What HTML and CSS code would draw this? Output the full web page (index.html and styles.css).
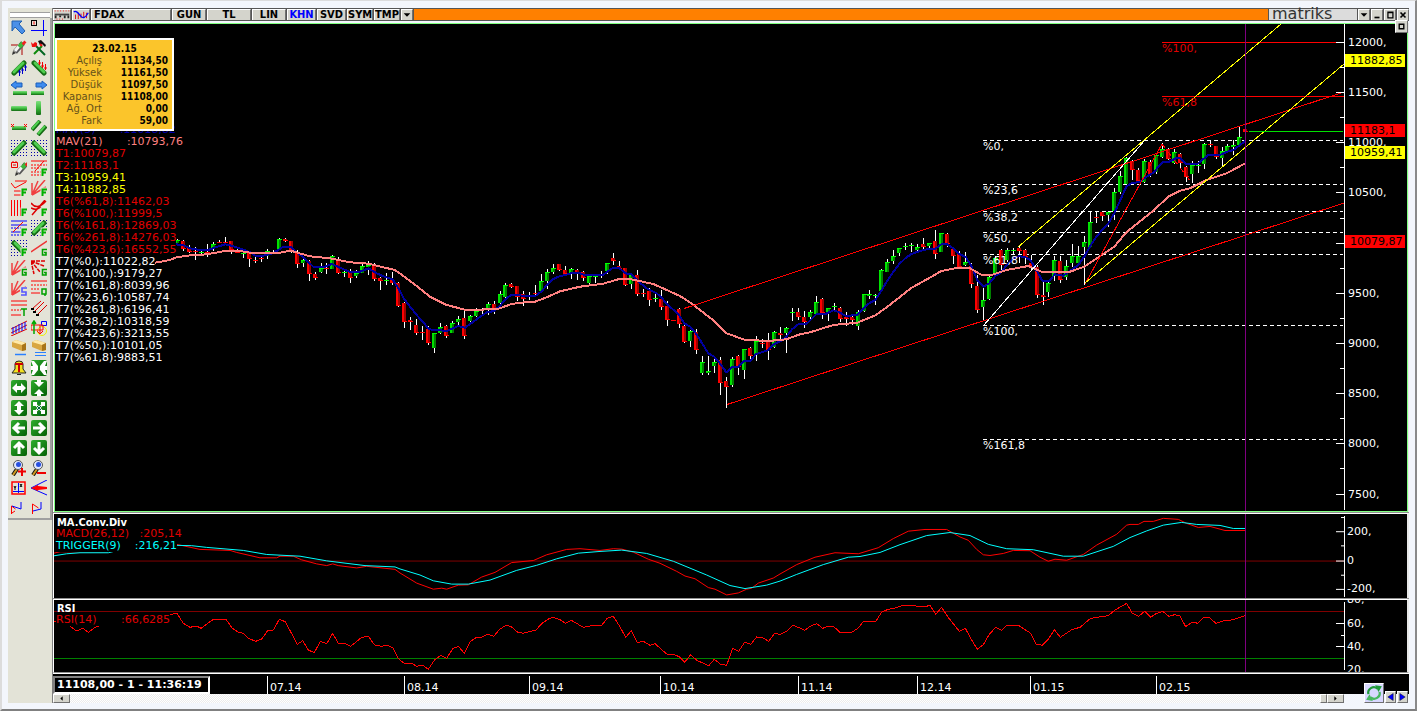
FILE: index.html
```
<!DOCTYPE html>
<html lang="tr">
<head>
<meta charset="utf-8">
<title>FDAX - matriks</title>
<link rel="stylesheet" href="styles.css">
</head>
<body>
<svg class="defs" aria-hidden="true">
  <defs>
    <linearGradient id="gbar" x1="0" y1="0" x2="0" y2="1"><stop offset="0" stop-color="#7fe07f"/><stop offset=".5" stop-color="#3cba3c"/><stop offset="1" stop-color="#146b14"/></linearGradient>
    <linearGradient id="gtile" x1="0" y1="0" x2="1" y2="1"><stop offset="0" stop-color="#2fae2f"/><stop offset="1" stop-color="#046004"/></linearGradient>
    <pattern id="dots" width="3" height="3" patternUnits="userSpaceOnUse"><rect width="1" height="1" fill="#0000a8"/></pattern>
    <g id="up45"><path d="M3 13L13 3" stroke="#146b14" stroke-width="5" stroke-linecap="round"/><path d="M3 12L12 3" stroke="#4fcf4f" stroke-width="3" stroke-linecap="round"/></g>
    <g id="dn45"><path d="M3 3L13 13" stroke="#146b14" stroke-width="5" stroke-linecap="round"/><path d="M4 3L13 12" stroke="#4fcf4f" stroke-width="3" stroke-linecap="round"/></g>
    <g id="tile"><rect width="16" height="16" rx="2" fill="url(#gtile)"/></g>
    <g id="pen"><path d="M4 12L12 3" stroke="#555" stroke-width="5"/><path d="M4 11L9 5" stroke="#f4f4f4" stroke-width="3"/><path d="M8 7L12 3" stroke="#3cba3c" stroke-width="4"/><path d="M12 2l2 2" stroke="#e22" stroke-width="4"/><path d="M1 15l1-4 3 2z" fill="#333"/></g>
    <g id="F"><path d="M9.500 7.500h7v9h-7z" fill="#e3e3d7"/><path d="M11.500 16V9.500H16M11 12.500h4" stroke="#00b000" stroke-width="2" fill="none"/></g>
    <g id="G"><path d="M9.500 7.500h7v9h-7z" fill="#e3e3d7"/><path d="M16 9.500h-4.500v5.500h3.500v-2.500h-2" stroke="#00a000" stroke-width="1.600" fill="none"/></g>
    <g id="fan"><path d="M1 15L1 3M1 15L7 1M1 15L14 0M1 15L15 7" stroke="#f04040" stroke-width="1.500" fill="none"/></g>
    <g id="loupe"><path d="M2 15L6 9" stroke="#111" stroke-width="4"/><path d="M2 15L6 9" stroke="#d09a20" stroke-width="2"/><circle cx="7" cy="5" r="4.500" fill="#dfe8ff" stroke="#555"/><circle cx="7.500" cy="4.500" r="2.500" fill="#2850e0"/></g>
    <g id="eraser"><path d="M1 2l4-2 10 3v7l-4 1-10-4z" fill="#d9a640"/><path d="M1 2l4-2 10 3-4 2z" fill="#ffe9a8"/><path d="M11 5l4-2v7l-4 1z" fill="#a87418"/></g>
  </defs>
</svg>
<div class="window">
  <nav class="tools" aria-label="Çizim araçları">
    <div class="grip"></div>
    <div class="palette">
      <button aria-label="Seç"><svg viewBox="0 0 16 16"><path d="M1 1h10L8 4l6 7-3 3-7-7-3 4z" fill="#4a90e8" stroke="#2060b0"/></svg></button>
      <button aria-label="İmleç"><svg viewBox="0 0 16 16"><path d="M12.500 0v16M0 10.500h16" stroke="#00f"/><rect x=".5" y=".5" width="5" height="5" fill="none" stroke="#000"/><path d="M3 1.500v3" stroke="red"/></svg></button>
      <button aria-label="Kalem"><svg viewBox="0 0 16 16"><path d="M0 5h11v10" fill="none" stroke="#a00"/><use href="#pen"/></svg></button>
      <button aria-label="Araçlar"><svg viewBox="0 0 16 16"><path d="M3 14L11 6" stroke="#0a8a0a" stroke-width="2"/><path d="M5 6l9 9" stroke="#062" stroke-width="2"/><path d="M0 2l2 2 2-2 2 1v3L4 7H1z" fill="#e11"/><path d="M7 1l3-1 5 5-1 2-3-3-2 1z" fill="#111"/><path d="M9 4l2 2" stroke="#e11" stroke-width="2"/></svg></button>
      <button aria-label="Yükselen"><svg viewBox="0 0 16 16"><use href="#up45"/><path d="M8.500 10v6M11.500 8v6M14.500 5v6M7 12h3M10 10h3M13 7h3" stroke="#00c"/></svg></button>
      <button aria-label="Düşen"><svg viewBox="0 0 16 16"><use href="#dn45"/><path d="M8.500 0v5M11.500 2v6M14.500 4v6M7 3h3M10 6h3M13 8h3" stroke="#e00"/></svg></button>
      <button aria-label="Sola"><svg viewBox="0 0 16 16"><path d="M0 5l5-4v2h6v4H5v2z" fill="#3d8cf0" stroke="#1c5fb8"/><rect x="2" y="11" width="14" height="4" fill="url(#gbar)"/></svg></button>
      <button aria-label="Sağa"><svg viewBox="0 0 16 16"><path d="M16 5l-5-4v2H5v4h6v2z" fill="#3d8cf0" stroke="#1c5fb8"/><rect y="11" width="13" height="4" fill="url(#gbar)"/></svg></button>
      <button aria-label="Yatay"><svg viewBox="0 0 16 16"><rect y="6" width="16" height="5" rx="1" fill="url(#gbar)"/></svg></button>
      <button aria-label="Dikey"><svg viewBox="0 0 16 16"><rect x="5" y="1" width="5" height="14" rx="1" fill="url(#gbar)"/></svg></button>
      <button aria-label="Parça"><svg viewBox="0 0 16 16"><rect x="1" y="6" width="14" height="4" fill="url(#gbar)"/><path d="M0 4l3 3m0-3l-3 3M13 4l3 3m0-3l-3 3" stroke="red"/></svg></button>
      <button aria-label="Paralel"><svg viewBox="0 0 16 16"><path d="M1 10L9 1M7 15l8-9" stroke="#146b14" stroke-width="4"/><path d="M1 9L8 1M7 14l7-8" stroke="#4fcf4f" stroke-width="2"/></svg></button>
      <button aria-label="Bölge yukarı"><svg viewBox="0 0 16 16"><rect width="16" height="16" fill="url(#dots)"/><use href="#up45"/></svg></button>
      <button aria-label="Bölge aşağı"><svg viewBox="0 0 16 16"><rect width="16" height="16" fill="url(#dots)"/><use href="#dn45"/></svg></button>
      <button aria-label="Not"><svg viewBox="0 0 16 16"><path d="M.5 2.500h6v5h-6zM2 1v2M5 1v2M2 5h3" fill="none" stroke="#e00"/><g transform="translate(3 1)"><use href="#pen"/></g></svg></button>
      <button aria-label="Fibonacci"><svg viewBox="0 0 16 16"><path d="M0 1h16M4 11L13 1" stroke="red" fill="none"/><path d="M0 5h16M0 8h10M0 12h10M0 15h10" stroke="red" stroke-dasharray="2 1"/><use href="#F"/></svg></button>
      <button aria-label="Fibonacci uzatma"><svg viewBox="0 0 16 16"><path d="M0 3l4 5L15 2M4 1h12M3 11h7M3 15h7" stroke="red" fill="none"/><use href="#F"/></svg></button>
      <button aria-label="Fibonacci yelpaze"><svg viewBox="0 0 16 16"><use href="#fan"/><use href="#F"/></svg></button>
      <button aria-label="Fibonacci zaman"><svg viewBox="0 0 16 16"><path d="M.5 0v16M3.500 0v16M6.500 0v16M9.500 0v16" stroke="red"/><use href="#F"/></svg></button>
      <button aria-label="Fibonacci yay"><svg viewBox="0 0 16 16"><path d="M0 3q6 8 15-2M0 8q5 3 10-1M1 15L14 0" stroke="#d00" stroke-width="1.500" fill="none"/><use href="#F"/></svg></button>
      <button aria-label="Fibonacci düzey"><svg viewBox="0 0 16 16"><path d="M0 1h16M0 5h16M0 12h10" stroke="#00f"/><path d="M2 12L12 2" stroke="red"/><path d="M0 8h10M0 15h10" stroke="#00f" stroke-dasharray="2 1"/><use href="#F"/></svg></button>
      <button aria-label="Fibonacci kanal"><svg viewBox="0 0 16 16"><rect width="16" height="16" fill="url(#dots)"/><use href="#up45"/><use href="#F"/></svg></button>
      <button aria-label="Fibonacci kanal aşağı"><svg viewBox="0 0 16 16"><rect width="16" height="16" fill="url(#dots)"/><use href="#dn45"/><use href="#F"/></svg></button>
      <button aria-label="Gann çizgi"><svg viewBox="0 0 16 16"><path d="M0 12L16 1" stroke="#e33" stroke-width="1.500"/><use href="#G"/></svg></button>
      <button aria-label="Gann yelpaze"><svg viewBox="0 0 16 16"><use href="#fan"/><use href="#G"/></svg></button>
      <button aria-label="Gann yelpaze ters"><svg viewBox="0 0 16 16"><path d="M0 1L15 1M0 1L13 6M0 1L9 12M0 1L3 14" stroke="#d00" stroke-width="1.500" stroke-dasharray="4 1"/><use href="#G"/></svg></button>
      <button aria-label="Hız çizgileri"><svg viewBox="0 0 16 16"><use href="#fan"/><path d="M9 7h7v9H9z" fill="#e3e3d7"/><path d="M16 8h-5v4h4v3h-5" stroke="#55f" stroke-width="1.600" fill="none"/></svg></button>
      <button aria-label="Çeyrek"><svg viewBox="0 0 16 16"><path d="M0 1h16M0 13h9" stroke="red"/><path d="M0 5h16M0 9h9" stroke="red" stroke-dasharray="2 1"/><path d="M11 9h4v5h-4zM14 14v2" stroke="#00a000" stroke-width="1.500" fill="none"/></svg></button>
      <button aria-label="Üçte bir"><svg viewBox="0 0 16 16"><path d="M0 1h16M0 5h16M0 15h10" stroke="red"/><path d="M0 10h10" stroke="red" stroke-dasharray="2 1"/><path d="M10 9h6M13 9v7" stroke="#00a000" stroke-width="1.500"/></svg></button>
      <button aria-label="Andrews"><svg viewBox="0 0 16 16"><path d="M1 9L10 1M3 12L13 2M6 15L16 5" stroke="#d00"/><path d="M0 9h3M2 12h3M5 15h3" stroke="#000" stroke-width="2"/></svg></button>
      <button aria-label="Regresyon"><svg viewBox="0 0 16 16"><path d="M0 9L16 1M0 13L16 5M0 16L16 9" stroke="#d00"/><path d="M2 7v7M5 6v7M8 4v8M11 3v8M14 2v7" stroke="#00f"/></svg></button>
      <button aria-label="Şekiller"><svg viewBox="0 0 16 16"><path d="M10.500 1.500h5v4h-5z" stroke="#00f" fill="none"/><circle cx="11" cy="11" r="4.500" stroke="#ee0" fill="none"/><path d="M0 5h12v5H0zM9 5v8M6 11l3 3 3-3" stroke="red" fill="none"/><path d="M3 14V2M1 4l2-3 2 3" stroke="#0a0" stroke-width="1.500" fill="none"/></svg></button>
      <button aria-label="Sil"><svg viewBox="0 0 16 16"><use href="#eraser"/><path d="M4 14.500h11" stroke="#2a80ff" stroke-width="1.500"/></svg></button>
      <button aria-label="Hepsini sil"><svg viewBox="0 0 16 16"><use href="#eraser"/><path d="M4 12.500h11M4 15.500h11" stroke="#2a80ff"/></svg></button>
      <button aria-label="Alarm"><svg viewBox="0 0 16 16"><path d="M1 13L4 9V4q0-3 4-3t4 3v5l3 4z" fill="#f2e020" stroke="#222"/><path d="M4 4h8M8 4v8" stroke="#c00" stroke-width="2"/><path d="M6 14h4v1H6z" fill="#222"/></svg></button>
      <button aria-label="Daralt"><svg viewBox="0 0 16 16"><use href="#tile"/><path d="M0 1h3l4 5 0 4-4 5H0l2-5H0V6h2zM16 1h-3L9 6v4l4 5h3l-2-5h2V6h-2z" fill="#fff"/></svg></button>
      <button aria-label="Yatay genişlet"><svg viewBox="0 0 16 16"><use href="#tile"/><path d="M1 8l5-5v3h4V3l5 5-5 5v-3H6v3z" fill="#fff"/></svg></button>
      <button aria-label="Dikey daralt"><svg viewBox="0 0 16 16"><use href="#tile"/><path d="M8 7L3 2h3V0h4v2h3zM8 9l-5 5h3v2h4v-2h3z" fill="#fff"/></svg></button>
      <button aria-label="Dikey genişlet"><svg viewBox="0 0 16 16"><use href="#tile"/><path d="M8 1l5 5h-3v4h3l-5 5-5-5h3V6H3z" fill="#fff"/></svg></button>
      <button aria-label="Sığdır"><svg viewBox="0 0 16 16"><use href="#tile"/><path d="M2 2h4v4H2zM10 2h4v4h-4zM2 10h4v4H2zM10 10h4v4h-4z" fill="#fff"/><path d="M3 3l10 10M13 3L3 13" stroke="#fff" stroke-width="2"/><path d="M6 6l4 4M10 6l-4 4M8 1v3M8 12v3" stroke="#064"/></svg></button>
      <button aria-label="Sol"><svg viewBox="0 0 16 16"><use href="#tile"/><path d="M14 8H4M8 3L3 8l5 5" stroke="#fff" stroke-width="3" fill="none"/></svg></button>
      <button aria-label="Sağ"><svg viewBox="0 0 16 16"><use href="#tile"/><path d="M2 8h10M8 3l5 5-5 5" stroke="#fff" stroke-width="3" fill="none"/></svg></button>
      <button aria-label="Yukarı"><svg viewBox="0 0 16 16"><use href="#tile"/><path d="M8 14V4M3 8l5-5 5 5" stroke="#fff" stroke-width="3" fill="none"/></svg></button>
      <button aria-label="Aşağı"><svg viewBox="0 0 16 16"><use href="#tile"/><path d="M8 2v10M3 8l5 5 5-5" stroke="#fff" stroke-width="3" fill="none"/></svg></button>
      <button aria-label="Yakınlaştır"><svg viewBox="0 0 16 16"><use href="#loupe"/><path d="M7 11.500h8M11 8v8" stroke="#e00" stroke-width="2"/></svg></button>
      <button aria-label="Uzaklaştır"><svg viewBox="0 0 16 16"><use href="#loupe"/><path d="M6 13h9" stroke="#e00" stroke-width="2"/></svg></button>
      <button aria-label="Eksenler"><svg viewBox="0 0 16 16"><rect x="1" y="2" width="13" height="12" fill="none" stroke="red" stroke-width="1.500"/><path d="M7.500 3v10M2 11.500h11" stroke="#00f"/><path d="M3 6l1 2 1-2M4 8v2M9 4l2 3M11 4l-2 3" stroke="#000" fill="none"/></svg></button>
      <button aria-label="Projeksiyon"><svg viewBox="0 0 16 16"><path d="M0 8L16 0M0 8l16 7" stroke="#00f"/><path d="M0 8l7-3v1l9 1v2l-9 1v1z" fill="red"/></svg></button>
      <button aria-label="Zikzak"><svg viewBox="0 0 16 16"><path d="M.5 14V6l4 3" fill="none" stroke="red"/><path d="M1 6l9 3V2" fill="none" stroke="#00f"/><path d="M1 13l3-2" stroke="red"/></svg></button>
      <button aria-label="Flama"><svg viewBox="0 0 16 16"><path d="M1.500 14V4l6 4" fill="none" stroke="red"/><path d="M2 11l8-2V2" fill="none" stroke="#00f"/></svg></button>
    </div>
  </nav>

  <main class="work">
    <header class="bar">
      <button class="cell ico" aria-label="Grafik tipi"><svg viewBox="0 0 16 11"><path d="M0 4h16v2H0z" fill="#444"/><path d="M1 6v3M6 6v2M11 6v3M15 6v3" stroke="#222" stroke-width="2"/><path d="M0 1h16M2 10h8" stroke="red" stroke-dasharray="1 2"/></svg></button>
      <button class="cell ico" aria-label="İndikatör"><svg viewBox="0 0 16 11"><path d="M2 5v5M5 3v7M8 4v5M11 2v6M14 3v6" stroke="#d00"/><path d="M0 2q3-2 7 4t9-3" fill="none" stroke="#00f" stroke-width="1.500"/></svg></button>
      <button class="cell symbol">FDAX</button>
      <button class="cell day">GUN</button>
      <button class="cell cur">TL</button>
      <button class="cell day">LIN</button>
      <button class="cell mid active">KHN</button>
      <button class="cell mid">SVD</button>
      <button class="cell sml">SYM</button>
      <button class="cell sml">TMP</button>
      <button class="cell box" aria-label="Liste"><svg viewBox="0 0 12 10"><path d="M2 3h8L6 7z"/></svg></button>
      <span class="fill"></span>
      <span class="brand">matriks</span>
      <button class="cell box" aria-label="Menü"><svg viewBox="0 0 12 10"><path d="M2 3h8L6 7z"/></svg></button>
      <button class="cell box" aria-label="Küçült"><svg viewBox="0 0 12 10"><path d="M3 7h6v2H3z"/></svg></button>
      <button class="cell box" aria-label="Büyüt"><svg viewBox="0 0 12 10"><path d="M3.500 1.500h6v7h-6zM3 2h7" fill="none" stroke="#000" stroke-width="1.500"/></svg></button>
      <button class="cell box" aria-label="Kapat"><svg viewBox="0 0 12 10"><path d="M3 2l6 6M9 2L3 8" stroke="#000" stroke-width="2"/></svg></button>
    </header>

    <section class="pane price" id="price">
      <svg class="plot" viewBox="55 24 1352 487" preserveAspectRatio="none" id="priceSvg"></svg>
      <ul class="values">
        <li class="navy">MAV(5)       :11018,82</li>
        <li class="pink">MAV(21)       :10793,76</li>
        <li class="red">T1:10079,87</li>
        <li class="red">T2:11183,1</li>
        <li class="yellow">T3:10959,41</li>
        <li class="yellow">T4:11882,85</li>
        <li class="red">T6(%61,8):11462,03</li>
        <li class="red">T6(%100,):11999,5</li>
        <li class="red">T6(%161,8):12869,03</li>
        <li class="red">T6(%261,8):14276,03</li>
        <li class="red">T6(%423,6):16552,55</li>
        <li>T7(%0,):11022,82</li>
        <li>T7(%100,):9179,27</li>
        <li>T7(%161,8):8039,96</li>
        <li>T7(%23,6):10587,74</li>
        <li>T7(%261,8):6196,41</li>
        <li>T7(%38,2):10318,59</li>
        <li>T7(%423,6):3213,55</li>
        <li>T7(%50,):10101,05</li>
        <li>T7(%61,8):9883,51</li>
      </ul>
      <table class="tip">
        <caption>23.02.15</caption>
        <tr><th>Açılış</th><td>11134,50</td></tr>
        <tr><th>Yüksek</th><td>11161,50</td></tr>
        <tr><th>Düşük</th><td>11097,50</td></tr>
        <tr><th>Kapanış</th><td>11108,00</td></tr>
        <tr><th>Ağ. Ort</th><td>0,00</td></tr>
        <tr><th>Fark</th><td>59,00</td></tr>
      </table>
      <button class="cell restore" aria-label="Paneli büyüt"><svg viewBox="0 0 12 10"><path d="M3.500 2.500h5v5h-5z" fill="none" stroke="#000" stroke-width="1.500"/></svg></button>
    </section>

    <section class="pane macd" id="macd">
      <svg class="plot" viewBox="54 514 1353 84" preserveAspectRatio="none" id="macdSvg"></svg>
      <h2>MA.Conv.Div</h2>
      <ul class="values">
        <li class="red">MACD(26,12)   :205,14</li>
        <li class="cyan">TRIGGER(9)    :216,21</li>
      </ul>
    </section>

    <section class="pane rsi" id="rsi">
      <svg class="plot" viewBox="54 600 1353 72" preserveAspectRatio="none" id="rsiSvg"></svg>
      <h2>RSI</h2>
      <ul class="values"><li class="red">RSI(14)       :66,6285</li></ul>
    </section>

    <footer class="time" id="time">
      <output class="quote">11108,00 - 1 - 11:36:19</output>
    </footer>
    <div class="scroll">
      <div class="track">
        <button class="cell step" aria-label="Geri"><svg viewBox="0 0 8 6"><path d="M5 1v4L3 3z"/></svg></button>
        <span class="fillgap"></span>
        <span class="cell thumb"></span>
        <button class="cell step" aria-label="İleri"><svg viewBox="0 0 8 6"><path d="M3 1v4l2-2z"/></svg></button>
      </div>
    </div>
    <div class="corner">
      <button class="cell refresh" aria-label="Yenile"><svg viewBox="0 0 16 16"><path d="M3 9a5 5 0 0 1 8-5" fill="none" stroke="#1f9a3a" stroke-width="2"/><path d="M9 1l6 1-3 5z" fill="#1f9a3a"/><path d="M13 7a5 5 0 0 1-8 5" fill="none" stroke="#48b860" stroke-width="2"/><path d="M7 15l-6-1 3-5z" fill="#48b860"/></svg></button>
      <button class="cell nav" aria-label="Önceki"><svg viewBox="0 0 10 10"><path d="M8 1v8L2 5z" fill="#00f" stroke="#000" stroke-width=".5"/></svg></button>
      <button class="cell nav" aria-label="Sonraki"><svg viewBox="0 0 10 10"><path d="M2 1v8l6-4z" fill="#00f" stroke="#000" stroke-width=".5"/></svg></button>
    </div>
  </main>
</div>
<script src="chart.js"></script>
</body>
</html>
```
FILE: styles.css
```
* { box-sizing: border-box; }
body {
  margin: 0;
  background: #f3f6fc;
  font: 11px/12px "DejaVu Sans", Verdana, sans-serif;
  color: #fff;
}
button { margin: 0; padding: 0; border: 0; background: none; font: inherit; color: #000; }
ul { list-style: none; margin: 0; padding: 0; }
.defs { position: absolute; width: 0; height: 0; }

.window {
  display: flex;
  height: 100vh;
  min-height: 600px;
  padding: 7px 6px 6px;
  border: solid #dcdcdc;
  border-width: 1px 2px 2px;
  border-right-color: #8a8a8a;
  border-bottom-color: #808080;
}

/* tool palette */
.tools { flex: none; width: 44px; background: #e3e3d7; }
.grip { height: 6px; margin: 4px 2px 0; border: solid #a0a0a0; border-width: 1px 0; background: #fff; }
.palette {
  display: grid;
  grid-template-columns: 16px 16px;
  grid-auto-rows: 16px;
  gap: 4px;
  padding: 2px 3px 2px;
  border: solid #a0a0a0;
  border-width: 0 2px 2px 0;
}
.palette button { width: 16px; height: 16px; }
.palette svg { display: block; width: 16px; height: 16px; overflow: hidden; fill: none; }

/* work area */
.work {
  position: relative;
  flex: 1;
  min-width: 0;
  display: flex;
  flex-direction: column;
  border-left: 1px solid #808080;
}
.bar {
  flex: none;
  display: flex;
  height: 13px;
  background: #555;
  gap: 1px;
  padding: 1px 0;
  font: bold 11px/11px "DejaVu Sans Condensed", "DejaVu Sans", sans-serif;
}
.cell {
  flex: none;
  background: #d4d4cc;
  border: 1px solid;
  border-color: #fff #707070 #707070 #fff;
}
.bar .cell { line-height: 10px; border-width: 1px 1px 0; }
.cell svg { display: block; width: 100%; height: 100%; }
.ico { width: 18px; }
.symbol { width: 80px; padding-left: 2px; text-align: left; }
.day { width: 34px; }
.cur { width: 44px; }
.mid { width: 29px; }
.sml { width: 26px; }
.bar .active { color: #0000ff; }
.box { width: 12px; }
.fill { flex: 1; background: #ff8000; }
.brand {
  flex: none;
  width: 88px;
  padding-left: 3px;
  background: #dcdcdc;
  color: #333;
  font: 16px/10px "DejaVu Sans", sans-serif;
}

.pane {
  position: relative;
  background: #000;
  border-left: 1px solid #fff;
  border-right: 2px solid #e8e8e8;
  overflow: hidden;
}
.price {
  flex: 1;
  min-height: 0;
  margin-top: 2px;
  border-left: 0;
  box-shadow: inset 1px 0 #fff;
  overflow: visible;
}
.macd, .rsi { border-top: 1px solid #fff; flex: none; }
.macd { height: 86px; margin-top: 1px; box-shadow: 0 -1px #909090; }
.rsi { height: 74px; box-shadow: 0 -1px #909090; border-bottom: 1px solid #909090; }
.plot { position: absolute; top: 0; left: 0; width: 100%; height: 100%; display: block; }
.price .plot {
  top: 0;
  left: 1px;
  width: 100%;
  border: 1px solid #80ff80;
}
.plot polyline, .plot line, .plot path { vector-effect: non-scaling-stroke; fill: none; }

.values { position: absolute; left: 3px; }
.values li { width: max-content; height: 12px; background: #000; white-space: pre; }
.price .values { top: 101px; }
.macd .values { top: 14px; left: 2px; }
.rsi .values { top: 14px; left: 2px; }
.pane h2 {
  position: absolute;
  top: 3px;
  left: 3px;
  margin: 0;
  font: bold 11px/12px "DejaVu Sans Condensed", "DejaVu Sans", sans-serif;
}
.red { color: #e00000; }
.yellow { color: #ffff00; }
.pink { color: #ff8080; }
.navy { color: #0000b0; }
.cyan { color: #00ffff; }

.tip {
  position: absolute;
  top: 15px;
  left: 2px;
  width: 119px;
  border: 2px solid #fff;
  border-top: 0;
  border-spacing: 0;
  background: #fbc52b;
  color: #000;
}
.tip caption {
  padding: 3px 0 0;
  border: 2px solid #fff;
  border-bottom: 0;
  background: #fbc52b;
  font: bold 10px/12px "DejaVu Sans Condensed", sans-serif;
}
.tip tr { height: 12px; }
.tip th, .tip td { padding: 0; text-align: right; line-height: 12px; }
.tip th { width: 45px; font-size: 10px; font-weight: normal; color: #66521a; white-space: nowrap; }
.tip td { padding-right: 4px; font: bold 10px/12px "DejaVu Sans Condensed", sans-serif; }
.tip tr:last-child > * { padding-bottom: 2px; }

.restore { position: absolute; top: -3px; right: -1px; width: 13px; height: 13px; }

/* labels placed at chart values */
.mark { position: absolute; margin-top: -5px; white-space: nowrap; }
.tag { width: 60px; margin-top: -6px; padding-left: 5px; line-height: 13px; color: #000; }
.tag.yellow { background: #ffff00; color: #000; }
.tag.red { background: #ff0000; color: #000; }

.time { position: relative; flex: none; height: 21px; border-top: 1px solid #fff; background: #000; }
.time .tick { position: absolute; top: 2px; bottom: 0; padding: 6px 0 0 2px; border-left: 1px solid #fff; }
.quote {
  position: absolute;
  top: 2px;
  left: 0;
  width: 157px;
  padding: 1px 2px;
  border: 2px solid;
  border-color: #808080 #fff #fff #808080;
  background: #000;
  font-weight: bold;
  white-space: nowrap;
}
.scroll { flex: none; height: 9px; padding-right: 65px; }
.track { display: flex; height: 9px; background: repeating-conic-gradient(#fff 0 25%, #ececec 0 50%) 0 0 / 2px 2px; }
.fillgap { flex: 1; }
.step { width: 17px; }
.thumb { width: 7px; }
.corner { position: absolute; right: 1px; bottom: 0; display: flex; align-items: flex-end; gap: 1px; }
.refresh { width: 20px; height: 20px; background: #d8d8ff; }
.nav { width: 11px; height: 12px; }
```
FILE: chart.js
```
// Bars are [direction, high, bodyTop, bodyBottom, low] in thirds of a unit below the block's base.
const blocks = [
  { base: 220, bars: `g57,60,68,70 r60,63,87,93 r74,80,97,98 r80,92,93,120 g92,96,100,104 r72,95,96,110 g66,72,84,92 r60,66,68,68 r50,66,68,75 r63,64,90,103 r88,94,98,98 g94,99,101,114 r96,98,116,140 r111,120,122,128 r108,114,118,125 g87,94,108,116 g90,95,97,102 g55,58,88,90 r54,58,64,66 r63,64,90,98 r90,95,132,143 g117,121,128,140 r120,123,163,183 r156,163,174,180 g128,143,155,160 r130,144,148,162 g105,109,147,148 r111,123,159,162 g148,156,158,170 r147,152,174,188 g150,158,168,173 g125,138,158,160 g123,135,140,165 r129,137,178,182 r170,175,184,210 g160,180,182,195 r156,181,190,195 r186,189,259,262 r246,250,306,323 r292,300,306,330 r297,315,340,345 r318,336,339,360 r318,327,370,375 g338,340,384,399 g309,321,338,342 r315,318,347,353 g303,309,338,339 g288,297,306,322 r270,294,349,357 g285,289,302,308 g264,273,288,290 r264,268,270,285 g246,252,266,284` },
  { base: 240, bars: `r183,192,208,222 g153,162,188,206 g129,136,171,174 r129,133,140,144 r138,139,170,183 r153,162,178,197 g157,166,168,180 r135,159,162,165 g102,124,153,155 g87,96,122,147 g72,85,96,102 r72,73,91,93 r78,90,103,106 g84,88,98,117 r87,90,100,120 r93,97,114,123 g105,108,128,132 g104,108,110,130 r93,104,105,115 g68,70,94,102 r39,55,62,75 r63,79,88,90 r84,85,136,138 g102,106,132,147 r90,106,162,168 r147,159,163,171 r144,154,180,198 g162,174,177,186 r150,178,202,210 r183,198,240,258 r240,240,242,242 r204,208,252,264 r256,258,307,309 g270,274,303,321 r267,276,330,342 g348,367,398,405 g348,394,398,405 g354,367,378,399 r351,360,428,465 r411,423,442,504 g351,357,435,441 r345,349,380,405 g327,328,389,417 r321,324,348,360 g288,303,342,363 r297,310,313,324 r279,306,330,360 g273,277,322,324` },
  { base: 220, bars: `r321,339,346,357 g321,325,338,399 g264,276,279,303 r264,276,290,300 r273,291,307,324 g270,277,291,297 g228,247,283,285 r234,237,280,297 g263,265,276,303 g249,258,261,270 r261,264,297,306 r276,290,296,318 r282,290,300,315 g270,277,317,330 g221,223,273,276 g210,222,227,237 g222,225,228,255 g147,150,214,216 g117,127,155,156 g90,108,122,132 g84,85,98,108 g69,78,82,90 g69,75,77,96 g72,81,90,93 r54,72,80,87 g68,70,77,88 r30,64,101,117 g39,40,95,97 r39,42,73,80 r80,86,107,132 r93,102,142,144 g96,126,134,138 r129,138,192,204 r165,198,269,279` },
  { base: 120, bars: `g495,541,561,603 g462,472,536,540 g408,415,458,460 r387,391,434,450 g384,391,420,426 g384,390,393,405 r378,384,392,430 r387,390,410,432 r405,430,437,450 r435,442,525,534 r486,525,530,555 g486,489,516,531 g408,420,468,483 r408,423,481,489 g420,438,470,480 g372,408,430,441 g378,408,429,438 g348,367,381,495 g273,307,380,384 r276,290,293,309 r273,275,288,303 g273,277,285,321 g204,217,272,300 g153,168,215,222 g111,114,192,195 r120,122,150,180 r144,150,184,189 g117,124,185,188 r120,126,162,171 g102,105,155,162 g70,88,111,114 r84,88,117,120 g87,96,128,132 r99,101,130,145 r138,141,172,185 g123,134,162,189 g123,135,137,158 g70,72,131,147 r63,72,76,82 r78,79,111,116 g81,94,114,138 g72,78,94,96 g60,74,80,105 g18,52,74,78 r27,28,36,36` }
];

// Curves are lists of [originX, originY, "x,y ..."] with offsets in thirds.
const fast = [
  [170, 220, '18,73 40,76 60,85 90,90 115,90 140,81 166,73 184,77 215,87 240,97 258,108 280,107 310,99 340,80 362,80 380,97 400,112 430,140 465,140 485,132 510,143 538,155 570,155 595,145 620,160 645,171 668,178 685,205 703,238 740,285 778,328 830,333 865,318 885,323 920,298'],
  [480, 240, '0,230 22,216 40,214 60,198 76,178 94,164 112,164 130,168 166,168 184,155 202,134 220,117 240,108 256,105 280,98 295,98 310,104 370,104 385,93 400,83 418,84 436,100 454,103 472,122 500,145 530,160 545,173 560,192 595,222 613,250 631,260 649,282 685,340 703,350 721,372 739,397 757,380 775,380 793,363 811,362 829,342 865,330'],
  [700, 220, '223,372 241,364 259,350 277,327 295,313 320,311 349,283 375,283 400,271 418,277 436,287 470,286 490,265 508,250 526,240 544,213 562,182 580,156 598,132 616,115 634,102 660,93 688,86 706,86 724,73 742,73 760,85 778,102'],
  [960, 120, '18,412 34,438 52,480 70,500 88,490 106,468 124,457 142,433 160,415 175,409 193,410 211,420 229,450 247,482 268,482 285,463 310,467 330,453 355,435 373,410 391,378 409,350 427,330 445,310 463,280 481,240 499,200 517,188 540,187 553,175 580,158 607,127 625,126 650,114 661,115 679,132 712,132 745,105 780,105 802,95 820,90 838,77 856,63']
];
const slow = [
  [170, 220, '-45,128 0,120 20,112 50,107 110,103 165,93 205,92 240,98 325,99 362,92 420,109 480,115 540,127 595,131 640,142 675,150 700,168 740,198 780,230 830,255 885,269 930,269'],
  [480, 240, '22,208 55,206 95,192 120,188 165,185 200,172 240,154 300,140 370,131 418,117 450,117 520,132 600,168 640,194'],
  [700, 220, '0,270 45,305 80,340 133,359 205,363 259,358 300,343 330,337 400,315 472,308 526,286 560,262 634,204 700,167 724,153 770,144'],
  [960, 120, '0,443 30,445 65,465 95,465 140,450 205,438 245,455 325,457 373,440 463,380 499,337 580,272 625,230 660,212 690,205 740,180 800,160 856,130']
];
const macd = [
  [0, 510, '162,128 180,124 320,124 400,112 530,102 600,117 690,120 710,126 780,142 830,142 840,137 880,137 905,148 950,160 980,165 998,160 1015,165 1070,172 1100,167 1185,176'],
  [400, 510, '0,187 50,217 100,235 125,232 140,235 175,223 205,222 245,199 285,185 335,156 400,150 440,133 500,117 540,115 600,120 640,115 665,116 700,125 745,146 780,158 830,182 855,196 885,204 925,230 945,235 980,252 1015,246 1040,235 1055,232 1075,217 1120,202'],
  [780, 510, '0,190 50,162 105,140 165,127 235,130 295,112 340,85 385,63 435,58 500,58 540,80 565,90 590,117 610,133 630,135 670,129 700,120 750,121 780,140 805,152 825,146 860,149 910,132 950,104 1010,72 1040,45'],
  [1130, 500, '0,73 25,73 42,64 70,64 100,55 145,58 170,70 205,82 240,79 285,91 346,91']
];
const trigger = [
  [0, 510, '162,136 200,130 240,127 325,127 345,122 530,105 575,106 620,111 730,120 800,132 900,137 980,151 1095,165 1185,169'],
  [400, 510, '0,175 60,193 100,210 155,220 205,220 270,208 350,179 410,164 470,145 535,128 600,123 665,119 740,129 820,152 920,193 990,224 1035,233 1100,223'],
  [780, 510, '0,211 50,191 130,162 205,140 240,138 300,126 360,103 440,76 510,67 570,76 625,102 680,115 760,118 850,137 910,137 1000,108'],
  [1130, 500, '0,112 50,92 100,75 155,67 200,73 270,76 310,85 346,85']
];
const rsi = [
  [0, 510, '162,335 180,330 205,345 230,363 248,354 265,367 285,352 305,345 400,330 510,314 530,309 550,340 570,352 590,348 603,355 640,328 678,328 697,355 715,367 730,370 745,385 767,394 785,387 803,362 820,360 838,328 856,335 892,403 908,392 925,420 943,428 961,394 980,401 998,370 1015,400 1035,400 1052,409 1085,382 1105,379 1124,405 1145,409 1160,405 1178,413 1195,445'],
  [400, 510, '0,451 13,460 35,460 50,469 68,466 85,478 103,451 122,436 140,445 158,416 175,409 193,430 210,395 228,383 245,381 263,373 281,379 300,357 320,345 337,352 353,367 370,370 408,360 425,341 443,328 460,322 478,328 496,340 514,331 550,352 580,346 605,346 622,325 640,319 658,347 677,382 694,362 712,398 730,394 750,406 765,401 800,432 820,433 838,440 854,457 872,434 890,451 926,467 943,448 962,463 980,466 998,415 1016,424 1034,397 1052,403 1070,381 1088,383 1106,394 1124,370'],
  [780, 510, '0,373 20,364 38,346 58,353 74,361 92,348 110,341 128,355 145,349 160,349 180,367 215,367 235,354 250,334 288,333 306,305 325,298 345,294 370,286 400,286 415,290 435,290 450,286 467,313 485,292 503,320 538,364 556,355 574,388 592,418 610,404 628,373 647,352 665,361 680,346 715,346 752,370 768,402 787,406 805,388 823,359 841,382 875,359 900,352 932,325 985,317 1005,300 1040,280 1057,310 1076,319 1094,304 1112,322 1130,310 1148,304 1166,319 1184,314 1200,318'],
  [1130, 500, '167,380 187,366 203,370 221,352 238,352 257,370 280,363 310,359 346,347']
];

const line = (x1, y1, x2, y2, color, extra = '') =>
  `<line x1="${x1}" y1="${y1}" x2="${x2}" y2="${y2}" stroke="${color}" ${extra}/>`;
const curve = (parts, color, width = 1) => {
  const pts = parts.flatMap(([ox, oy, s]) => s.split(' ').map(p => {
    const [x, y] = p.split(',').map(Number);
    return (ox + x / 3).toFixed(1) + ',' + (oy + y / 3).toFixed(1);
  }));
  return `<polyline points="${pts.join(' ')}" stroke="${color}" stroke-width="${width}"/>`;
};
const rect = (x, y, w, h, c) => `<rect x="${x}" y="${y}" width="${w}" height="${h}" fill="${c}"/>`;

function candles() {
  let i = 0, out = '';
  for (const b of blocks) {
    for (const bar of b.bars.split(' ')) {
      const [hi, top, bot, lo] = bar.slice(1).split(',').map(v => Math.round(b.base + v / 3));
      const x = Math.floor(177.8 + 5.967 * i++);
      const h = Math.max(1, bot - top);
      const up = bar[0] === 'g';
      out += rect(x, hi, 1, Math.max(1, lo - hi), '#fff');
      out += rect(x - 2, top, 2, h, up ? '#00e000' : '#ff0000') + rect(x, top, 2, h, up ? '#008000' : '#a00000');
      out += up ? rect(x - 2, top, 5, 1, '#00ff00') : rect(x - 2, top + h - 1, 5, 1, '#ff0000');
    }
  }
  return out;
}
const ticks = (list, len) => list.map(y => line(1344 - len, y + .5, 1344, y + .5, '#fff')).join('');
const cursor = (a, b) => line(1245.5, a, 1245.5, b, '#800080');

const major = [42, 92, 142, 192, 243, 293, 343, 393, 443, 494];
const minor = [67, 117, 167, 218, 268, 318, 368, 418, 468];
const fib = [[140, '%0,'], [184, '%23,6'], [211, '%38,2'], [232, '%50,'], [254, '%61,8'], [325, '%100,'], [439, '%161,8']];

document.getElementById('priceSvg').innerHTML = '<g shape-rendering="crispEdges">' +
  fib.map(f => line(983, f[0] + .5, 1343, f[0] + .5, '#fff', 'stroke-dasharray="4 3"')).join('') +
  candles() + curve(fast, '#0000a0', 2) + curve(slow, '#ff8080', 2) +
  line(1162, 42.5, 1344, 42.5, '#f00') + line(1162, 96.5, 1344, 96.5, '#f00') +
  line(684, 308.5, 1344, 92, '#f00') + line(727, 404.5, 1344, 203, '#f00') +
  line(1085, 284, 1162, 144, '#f00') + line(1162, 144, 1191, 182, '#f00', 'stroke-dasharray="5 5"') +
  line(984, 325, 1145, 140, '#fff') +
  line(1018, 247, 1281, 24, '#ff0') + line(1085, 283, 1344, 64, '#ff0') +
  line(1249, 131.5, 1343, 131.5, '#00e000') + cursor(24, 511) +
  line(1344.5, 24, 1344.5, 510, '#fff') + ticks(major, 8) + ticks(minor, 4) + '</g>';

document.getElementById('macdSvg').innerHTML = '<g shape-rendering="crispEdges">' +
  line(54, 560.5, 1344, 560.5, '#800000') + curve(macd, '#f00') + curve(trigger, '#0ff') + cursor(514, 598) +
  line(1344.5, 516, 1344.5, 596, '#fff') + ticks([531, 560, 588], 8) + ticks([517, 545, 574], 3) + '</g>';

document.getElementById('rsiSvg').innerHTML = '<g shape-rendering="crispEdges">' +
  line(54, 611.5, 1344, 611.5, '#800000') + line(54, 658.5, 1344, 658.5, '#008000') + curve(rsi, '#f00') + cursor(600, 672) +
  line(1344.5, 602, 1344.5, 670, '#fff') + ticks([623, 646], 8) + ticks([635], 3) + '</g>';

function mark(id, box, x, y, text, cls = '') {
  const el = document.createElement('span');
  el.className = 'mark ' + cls;
  el.textContent = text;
  el.style.left = (x - box[0]) / box[2] * 100 + '%';
  el.style.top = (y - box[1]) / box[3] * 100 + '%';
  document.getElementById(id).append(el);
}
const priceBox = [53, 23, 1354, 489], macdBox = [54, 514, 1353, 85], rsiBox = [54, 600, 1353, 72];
major.forEach((y, i) => { if (i !== 4) mark('price', priceBox, 1348, y, (12000 - i * 500) + ','); });
fib.forEach(f => mark('price', priceBox, 983, f[0] + 6, f[1]));
mark('price', priceBox, 1162, 48, '%100,', 'red');
mark('price', priceBox, 1162, 102, '%61,8', 'red');
mark('price', priceBox, 1345, 60, '11882,85', 'tag yellow');
mark('price', priceBox, 1345, 130, '11183,1', 'tag red');
mark('price', priceBox, 1345, 152, '10959,41', 'tag yellow');
mark('price', priceBox, 1345, 241, '10079,87', 'tag red');
mark('macd', macdBox, 1347, 531, '200,');
mark('macd', macdBox, 1347, 560, '0');
mark('macd', macdBox, 1347, 588, '-200,');
mark('rsi', rsiBox, 1347, 599, '80,');
mark('rsi', rsiBox, 1347, 623, '60,');
mark('rsi', rsiBox, 1347, 646, '40,');
mark('rsi', rsiBox, 1347, 669, '20,');

[[267, '07.14'], [404, '08.14'], [529, '09.14'], [660, '10.14'], [798, '11.14'], [917, '12.14'], [1030, '01.15'], [1156, '02.15']].forEach(([x, t]) => {
  const el = document.createElement('span');
  el.className = 'tick';
  el.textContent = t;
  el.style.left = (x - 53) / 1356 * 100 + '%';
  document.getElementById('time').append(el);
});
```
